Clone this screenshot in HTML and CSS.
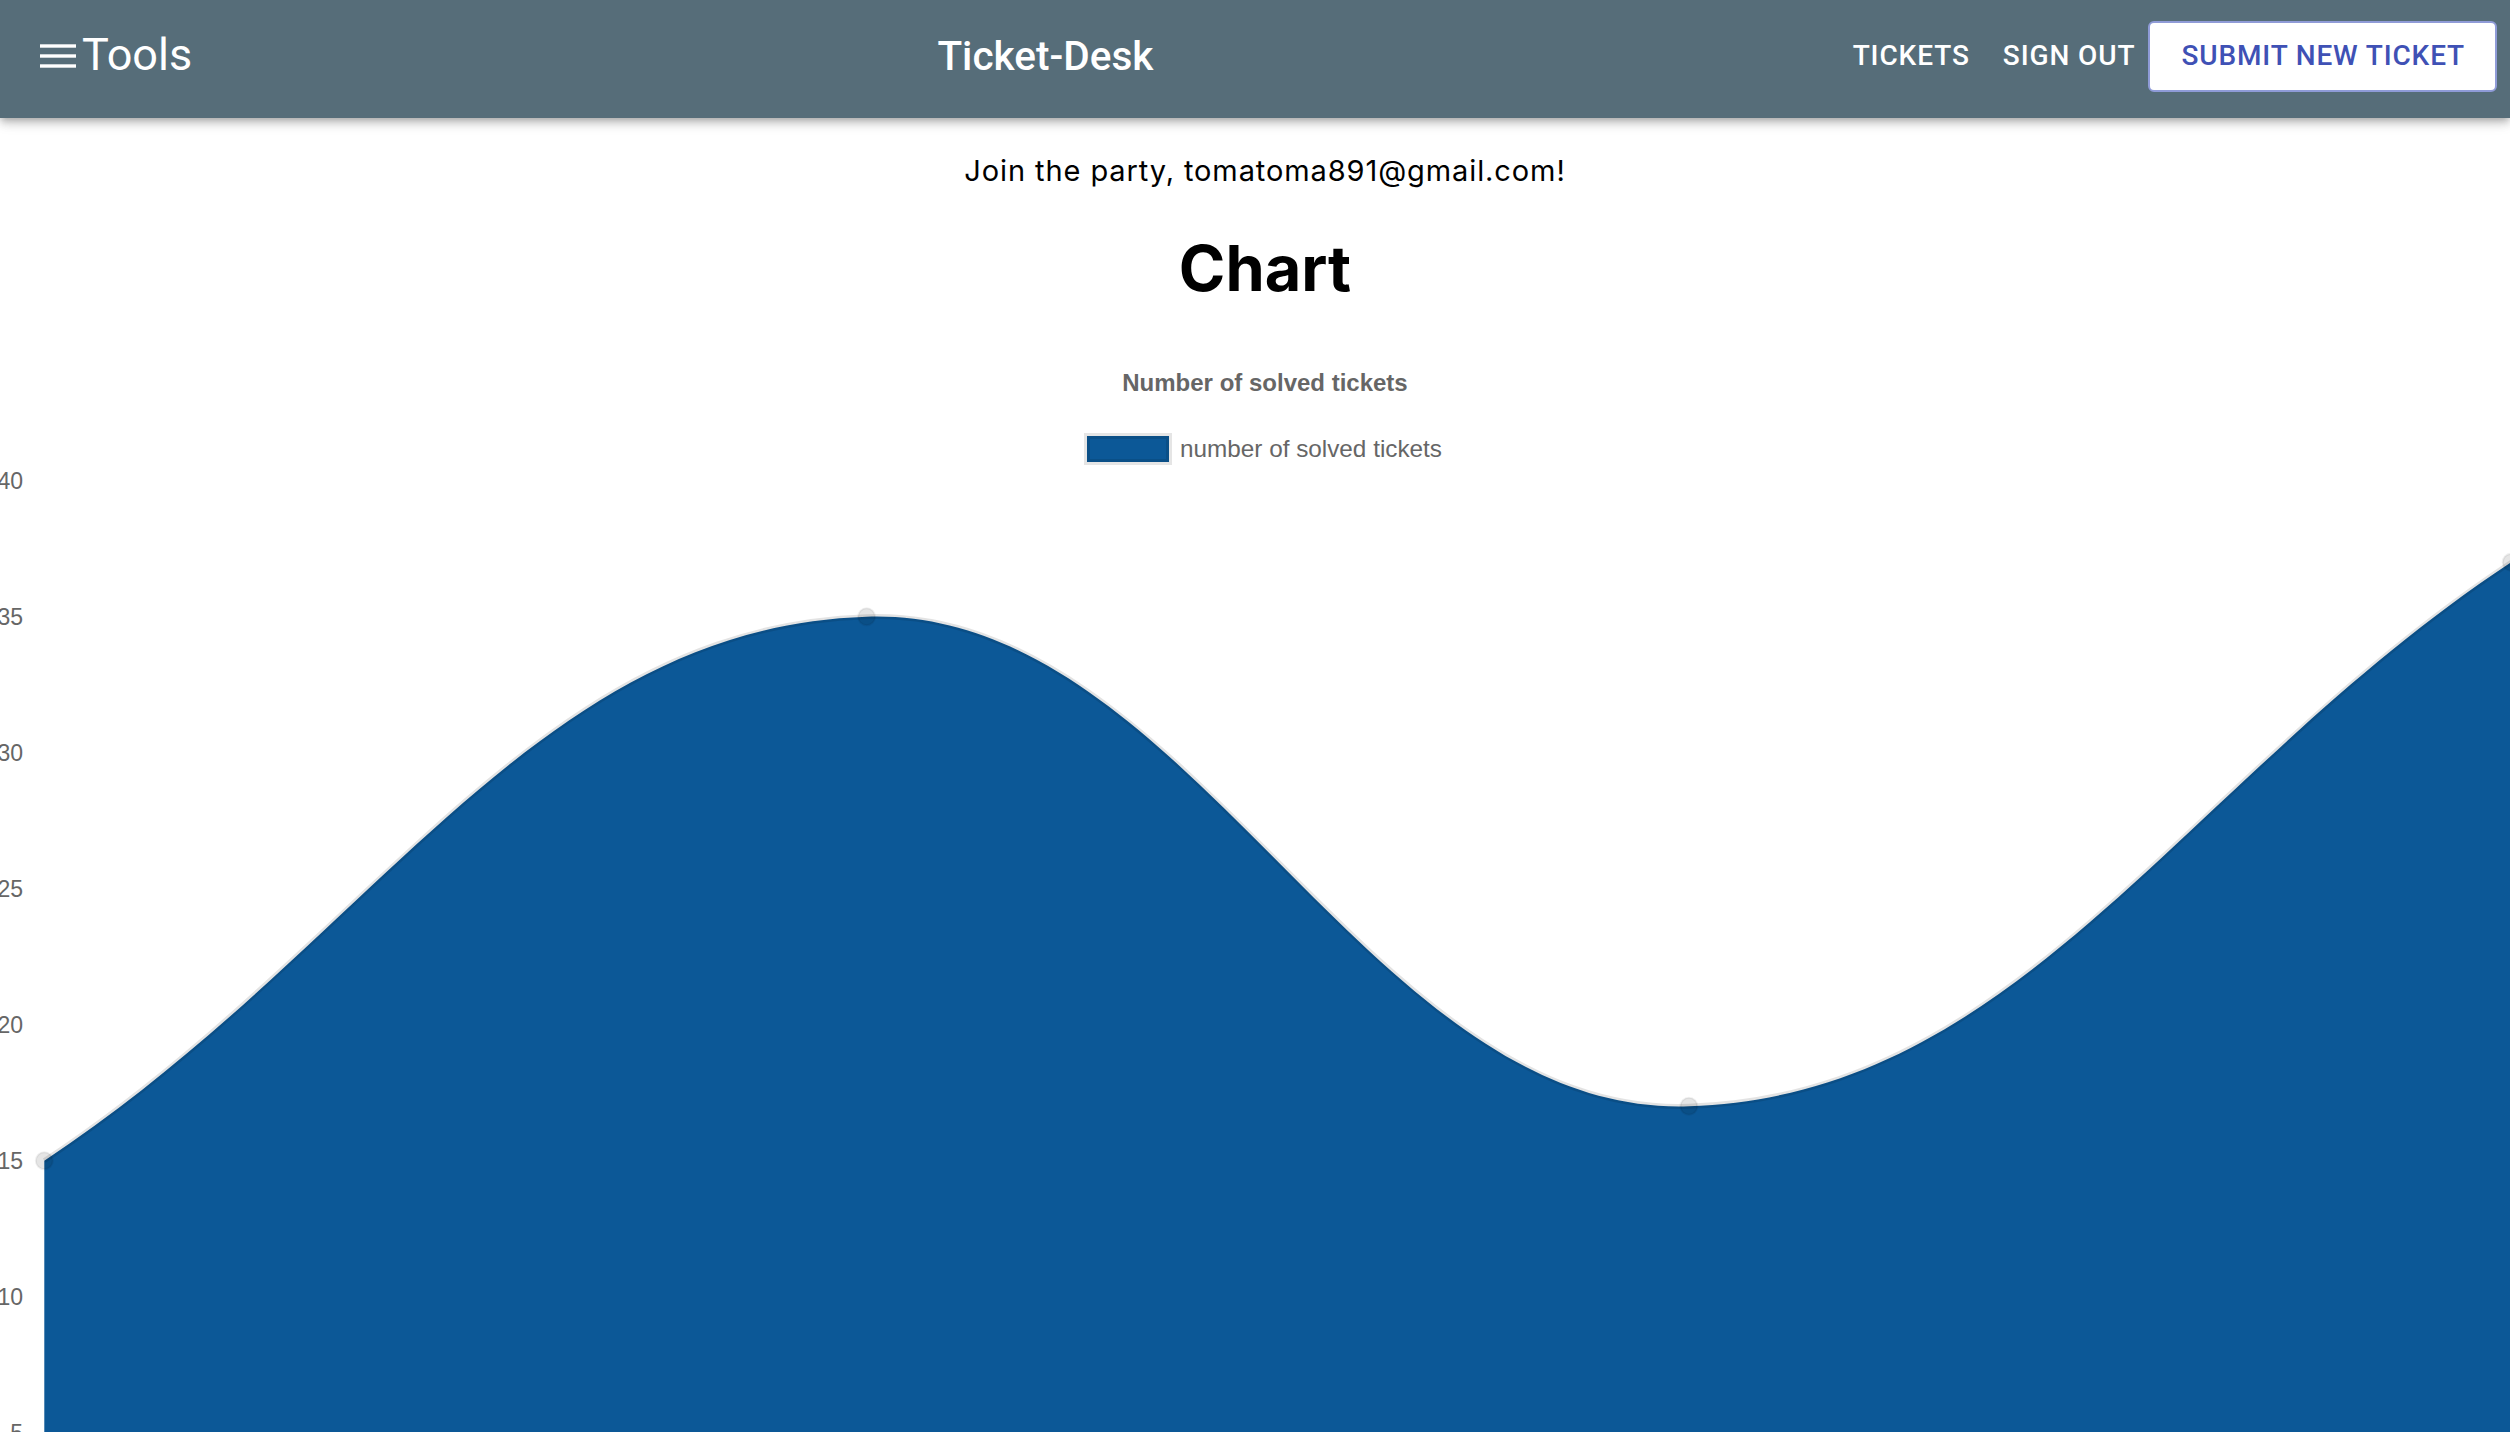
FILE: index.html
```html
<!DOCTYPE html>
<html lang="en">
<head>
<meta charset="utf-8">
<title>Ticket-Desk</title>
<link rel="stylesheet" href="styles.css">
</head>
<body>
<header class="appbar">
  <div class="brand">
    <svg class="menu-icon" width="36" height="24" viewBox="0 0 36 24" aria-hidden="true">
      <rect x="0" y="0.3" width="36" height="3.4"></rect>
      <rect x="0" y="10.3" width="36" height="3.4"></rect>
      <rect x="0" y="20.3" width="36" height="3.4"></rect>
    </svg>
    <span class="brand-text">Tools</span>
  </div>
  <div class="title">Ticket-Desk</div>
  <nav class="nav">
    <a class="nav-link">Tickets</a>
    <a class="nav-link">Sign out</a>
    <a class="nav-button">Submit new ticket</a>
  </nav>
</header>
<main class="content">
  <div class="intro">
    <p class="greeting">Join the party, tomatoma891@gmail.com!</p>
    <h1 class="page-title">Chart</h1>
    <div class="chart-title">Number of solved tickets</div>
    <div class="legend">
      <span class="legend-box"></span>
      <span class="legend-label">number of solved tickets</span>
    </div>
  </div>
  <svg class="plot" viewBox="0 466 2510 967" width="2510" height="967">
    <g class="ticks">
      <text x="23" y="481.7">40</text>
      <text x="23" y="617.7">35</text>
      <text x="23" y="753.7">30</text>
      <text x="23" y="889.7">25</text>
      <text x="23" y="1025.7">20</text>
      <text x="23" y="1161.7">15</text>
      <text x="23" y="1297.7">10</text>
      <text x="23" y="1433.7">5</text>
    </g>
    <path class="area" d="M 44.3 1161.7 C 373.2 944.1, 532.8 628.7, 866.6 617.7 C 1190.6 607.0, 1364.9 1118.0, 1688.9 1107.3 C 2022.7 1096.3, 2182.3 780.9, 2511.2 563.3 L 2511.2 1600 L 44.3 1600 Z"></path>
    <path class="line" d="M 44.3 1161.7 C 373.2 944.1, 532.8 628.7, 866.6 617.7 C 1190.6 607.0, 1364.9 1118.0, 1688.9 1107.3 C 2022.7 1096.3, 2182.3 780.9, 2511.2 563.3"></path>
    <g class="points">
      <circle cx="44.3" cy="1161.7" r="8.5"></circle>
      <circle cx="866.6" cy="617.7" r="8.5"></circle>
      <circle cx="1688.9" cy="1107.3" r="8.5"></circle>
      <circle cx="2511.2" cy="563.3" r="8.5"></circle>
    </g>
  </svg>
</main>
</body>
</html>
```
FILE: styles.css
```css
html, body {
  margin: 0;
  padding: 0;
  background: #ffffff;
  overflow: hidden;
}

.appbar {
  position: relative;
  z-index: 1;
  display: flex;
  align-items: center;
  box-sizing: border-box;
  height: 118px;
  padding: 0 13px 6px 40px;
  background: #566d79;
  color: #ffffff;
  font-family: Roboto, "Liberation Sans", sans-serif;
  box-shadow: 0 3px 6px -2px rgba(0, 0, 0, 0.2), 0 6px 8px 0 rgba(0, 0, 0, 0.14), 0 2px 16px 0 rgba(0, 0, 0, 0.12);
}

.brand {
  display: flex;
  align-items: center;
  gap: 6px;
  padding-right: 62px;
}

.menu-icon {
  display: block;
  fill: #ffffff;
}

.brand-text {
  font-size: 45px;
  font-weight: 400;
  line-height: 1;
  margin-top: -4px;
}

.title {
  flex: 1;
  text-align: center;
  font-size: 40.5px;
  font-weight: 500;
  line-height: 1;
}

.nav {
  display: flex;
  align-items: center;
}

.nav-link {
  padding: 0 16px;
  font-size: 28px;
  font-weight: 500;
  letter-spacing: 0.9px;
  text-transform: uppercase;
  line-height: 1;
}

.nav-link + .nav-link {
  padding-left: 17px;
  padding-right: 13px;
}

.nav-button {
  display: flex;
  align-items: center;
  box-sizing: border-box;
  height: 71px;
  padding: 0 30px 0 31px;
  border: 2px solid #8f9bd7;
  border-radius: 6px;
  background: #ffffff;
  color: #3f51b5;
  font-size: 28px;
  font-weight: 500;
  letter-spacing: 0.85px;
  text-transform: uppercase;
  line-height: 1;
}

.content {
  display: block;
}

.intro {
  padding-left: 20px;
  text-align: center;
}

.greeting {
  margin: 35px 0 0;
  font-family: Inter, "Liberation Sans", sans-serif;
  font-size: 29px;
  font-weight: 400;
  letter-spacing: 0.9px;
  line-height: 36px;
  color: #000000;
}

.page-title {
  margin: 40px 0 0;
  font-family: Inter, "Liberation Sans", sans-serif;
  font-size: 63px;
  font-weight: 700;
  line-height: 78px;
  color: #000000;
}

.chart-title {
  margin-top: 62px;
  font-family: "Liberation Sans", Arial, sans-serif;
  font-size: 24px;
  font-weight: 700;
  line-height: 28px;
  color: #666666;
}

.legend {
  display: flex;
  justify-content: center;
  align-items: center;
  gap: 8px;
  height: 32px;
  margin-top: 36px;
}

.legend-box {
  display: block;
  box-sizing: border-box;
  width: 88px;
  height: 32px;
  margin-left: -4px;
  background: #0c5897;
  background-clip: padding-box;
  border: 3px solid rgba(0, 0, 0, 0.1);
  box-shadow: inset 0 0 0 3px rgba(0, 0, 0, 0.1);
}

.legend-label {
  font-family: "Liberation Sans", Arial, sans-serif;
  font-size: 24.3px;
  line-height: 32px;
  color: #666666;
}

.plot {
  display: block;
  width: 2510px;
  height: 967px;
}

.ticks text {
  font-family: "Liberation Sans", Arial, sans-serif;
  font-size: 23px;
  fill: #666666;
  text-anchor: end;
  dominant-baseline: central;
}

.area {
  fill: #0c5897;
}

.line {
  fill: none;
  stroke: rgba(0, 0, 0, 0.11);
  stroke-width: 5;
}

.points circle {
  fill: rgba(0, 0, 0, 0.1);
  stroke: rgba(0, 0, 0, 0.06);
  stroke-width: 2;
}
```
